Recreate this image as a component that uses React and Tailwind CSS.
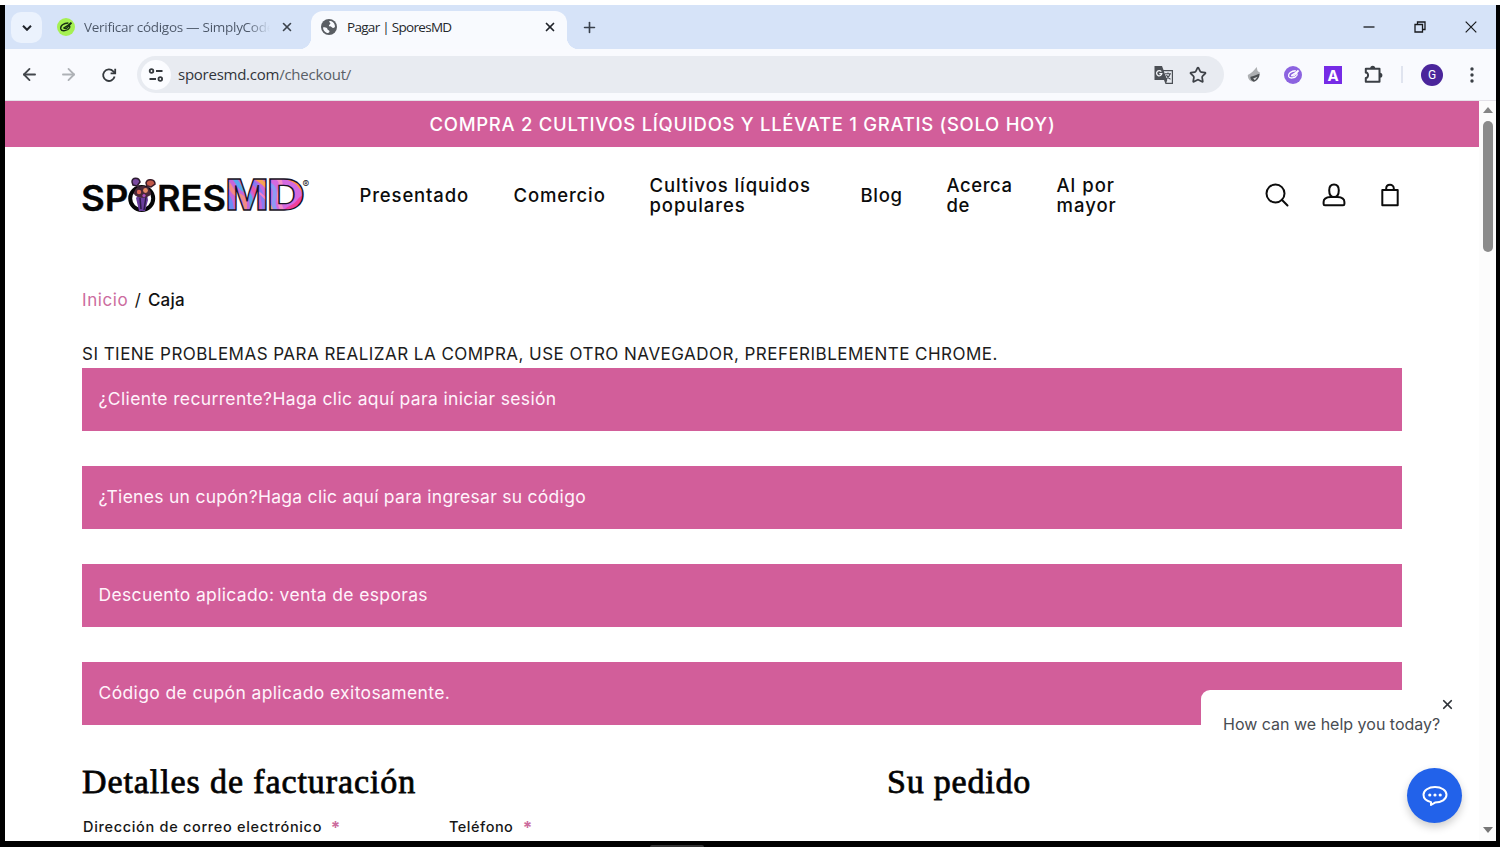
import { X, Plus, ArrowLeft, ArrowRight, Star } from "lucide-react";

const navItems = [
  { label: ["Presentado"], box: "w-[154px] tracking-[0.85px]" },
  { label: ["Comercio"], box: "w-[136px] tracking-[0.85px]" },
  { label: ["Cultivos líquidos", "populares"], box: "w-[211px] tracking-[0.9px]" },
  { label: ["Blog"], box: "w-[86px] tracking-[0.7px]" },
  { label: ["Acerca", "de"], box: "w-[110px] tracking-[0.55px]" },
  { label: ["Al por", "mayor"], box: "w-[90px] tracking-[1px]" },
];

const notices = [
  { text: "¿Cliente recurrente?Haga clic aquí para iniciar sesión", spacing: "tracking-[0.36px]" },
  { text: "¿Tienes un cupón?Haga clic aquí para ingresar su código", spacing: "tracking-[0.28px]" },
  { text: "Descuento aplicado: venta de esporas", spacing: "tracking-[0.35px]" },
  { text: "Código de cupón aplicado exitosamente.", spacing: "tracking-[0.37px]" },
];

function Leaf({ className }) {
  return (
    <svg viewBox="0 0 20 20" className={className} fill="none" stroke="currentColor" strokeWidth="1.8">
      <path d="M13 5C7 5 2.500 8.500 3.500 12.500c1 3.500 9 2.500 11-1.500 1-2.300-1-3.500-3-2.500L7 11.500" />
      <path d="M7 11.500l3.500.3 6.500-7M12 8.500l4.500-4" />
    </svg>
  );
}

function TabStrip() {
  return (
    <div className="flex h-[44px] bg-[#d6e3f8]">
      <div className="ml-1.5 mt-[7px] flex h-[31px] w-[31px] items-center justify-center rounded-[10px] bg-[#ebf2fd]">
        <svg viewBox="0 0 10 6" className="h-[6px] w-[10px]" fill="none" stroke="#20242a" strokeWidth="2">
          <path d="M1 .8l4 4 4-4" />
        </svg>
      </div>
      <div className="flex h-[44px] w-[269px] items-center pl-[15px]">
        <span className="flex h-[18px] w-[18px] items-center justify-center rounded-full bg-[#a5f052] text-[#183014]">
          <Leaf className="h-[16px] w-[16px]" />
        </span>
        <span className="ml-[9px] w-[186px] whitespace-nowrap bg-linear-to-r from-[#4b5667] from-88% to-transparent bg-clip-text text-[13.500px] tracking-[-0.28px] text-transparent">
          Verificar códigos — SimplyCode
        </span>
        <X className="ml-[10px] h-[14px] w-[14px] text-[#3c434c]" strokeWidth={2.8} />
      </div>
      <div className="relative mt-[6px] flex h-[38px] w-[256px] items-center rounded-t-[12px] bg-[#f8fafe] pb-[6px] pl-[10px]">
        <span className="absolute bottom-0 left-[-12px] h-3 w-3 bg-[radial-gradient(circle_at_0_0,#d6e3f8_12px,#f8fafe_12.5px)]" />
        <span className="absolute right-[-12px] bottom-0 h-3 w-3 bg-[radial-gradient(circle_at_100%_0,#d6e3f8_12px,#f8fafe_12.5px)]" />
        <svg viewBox="0 0 16 16" className="h-4 w-4">
          <circle cx="8" cy="8" r="8" fill="#5a5e63" />
          <path d="M2 8.500c2.500-.5 4 .2 4.500 1.700.3 1.200 2.200.8 2 2.300-.2 1-1.500 1.700-2.500 1.600C3.500 13 2 11 2 8.500zM8.500 2c3-.3 5.500 2.500 5.500 5.500-.7 2-2.500 1.500-3.500.5-.6-.8-2.500-.3-2.600-1.500 0-1 1.600-1 1.500-2C9.300 3.500 7.500 3 8.500 2z" fill="#f8fafe" />
        </svg>
        <span className="ml-[10px] w-[189px] whitespace-nowrap text-[13.500px] tracking-[-0.7px] text-[#25282c]">
          Pagar | SporesMD
        </span>
        <X className="ml-[7px] h-[14px] w-[14px] text-[#20242a]" strokeWidth={3} />
      </div>
      <div className="ml-[14px] flex flex-1 items-center">
        <Plus className="h-[17px] w-[17px] text-[#39414c]" strokeWidth={2.3} />
      </div>
      <div className="flex w-[133px] items-center">
        <svg viewBox="0 0 12 12" className="h-3 w-3" stroke="#17191c" strokeWidth="1.3">
          <path d="M.5 6h11" />
        </svg>
        <svg viewBox="0 0 12 12" className="ml-[39px] h-3 w-3" fill="none" stroke="#17191c" strokeWidth="1.3">
          <path d="M1 3.500h7.500V11H1zM3.500 3.500V1H11v7.500H8.500" />
        </svg>
        <svg viewBox="0 0 12 12" className="ml-[39px] h-3 w-3" stroke="#17191c" strokeWidth="1.2">
          <path d="M.7.7l10.600 10.600M11.300.7L.7 11.300" />
        </svg>
      </div>
    </div>
  );
}

function Toolbar() {
  return (
    <div className="flex h-[52px] items-center border-b border-[#e3e1e8] bg-[#f9fafe] pl-[15px]">
      <ArrowLeft className="h-[19px] w-[19px] text-[#43474c]" strokeWidth={2.3} />
      <ArrowRight className="ml-5 h-[19px] w-[19px] text-[#aeb1b6]" strokeWidth={2.3} />
      <svg viewBox="0 0 16 16" className="ml-[23px] h-4 w-4" fill="none" stroke="#35393e" strokeWidth="1.8">
        <path d="M13.600 9.500A5.800 5.800 0 1 1 12.300 4.300L14 6" />
        <path d="M14.200 1.700v4.600H9.600" />
      </svg>
      <div className="ml-[20px] flex h-[37px] w-[1087px] items-center rounded-full bg-[#e8ebf1] pl-1">
        <span className="flex h-[30px] w-[30px] items-center justify-center rounded-full bg-[#fbfcff]">
          <svg viewBox="0 0 16 14" className="h-[14px] w-4" fill="none" stroke="#35393e" strokeWidth="1.8">
            <circle cx="3.500" cy="3" r="1.800" />
            <path d="M8 3h6.500M1.500 11H8" />
            <circle cx="12.300" cy="11" r="1.800" />
          </svg>
        </span>
        <span className="ml-[7px] flex-1 text-[15px] tracking-[-0.25px] text-[#30343a]">
          sporesmd.com<span className="text-[#5a5f67]">/checkout/</span>
        </span>
        <svg viewBox="0 0 20 20" className="h-5 w-5">
          <path d="M.500 1h7.500l1.500 4H19v14h-7.500L10 15H.500z" fill="#4b4f55" />
          <path d="M9.800 6.200h8v11.600h-5.500l1-2.800z" fill="#e8ebf1" />
          <path d="M11 8.700h6M14 7.500v1.200M16 9c-.6 2.500-2 4-4 5.200M12.500 10c.7 2 2.200 3.500 4 4.300" fill="none" stroke="#4b4f55" strokeWidth="1.100" />
          <path d="M7.300 6.600a2.600 2.600 0 1 0 .5 2H5.300" fill="none" stroke="#f4f6fa" strokeWidth="1.300" />
        </svg>
        <Star className="mr-[17px] ml-[15px] h-[18px] w-[18px] text-[#3d4147]" strokeWidth={2.3} />
      </div>
      <svg viewBox="0 0 18 20" className="ml-[22px] h-[18px] w-[16px]">
        <path d="M2 10C6 8 9 5 12 1c1 3 0 5 4 6-2 1-2.500 3-2 5-1 4-5 6-8 5-3-1-4-4-4-7z" fill="#aeb0b3" />
        <path d="M5 12c3-.5 7-2 10.500-4-.3 5-3 9-7 9.500-2-1-4-3-3.500-5.500z" fill="#4c4f53" />
        <path d="M8 14l5-2-3 4z" fill="#d9dadc" />
      </svg>
      <span className="ml-[22px] flex h-[18px] w-[18px] items-center justify-center rounded-full bg-[#8c63e0] text-white">
        <Leaf className="h-[15px] w-[15px]" />
      </span>
      <span className="ml-[22px] flex h-[18px] w-[18px] items-center justify-center bg-[#762be6] pt-px font-[Inter] text-[15px] leading-none font-bold text-white">
        A
      </span>
      <svg viewBox="0 0 20 20" className="ml-[21px] h-5 w-5" fill="none" stroke="#3b3f45" strokeWidth="2" strokeLinejoin="round">
        <path d="M2.800 3.700H16.500V16.700H2.800V13c3 .2 3-5.600 0-5.400z" />
        <path d="M8.200 3.300a1.500 1.500 0 0 1 3 0M16.900 8.800a1.500 1.500 0 0 1 0 3" fill="#3b3f45" />
      </svg>
      <span className="ml-[18px] h-[17px] w-[2px] bg-[#e0e4ef]" />
      <span className="ml-[18px] flex h-[22px] w-[22px] items-center justify-center rounded-full bg-[#4b259b] pt-px font-[Roboto] text-[12px] leading-none text-white">
        G
      </span>
      <svg viewBox="0 0 4 16" className="ml-[27px] h-4 w-1" fill="#3b3f45">
        <circle cx="2" cy="2" r="1.700" />
        <circle cx="2" cy="8" r="1.700" />
        <circle cx="2" cy="14" r="1.700" />
      </svg>
    </div>
  );
}

function Logo() {
  return (
    <svg viewBox="0 -10 230 60" className="h-[60px] w-[230px] overflow-visible" role="img" aria-label="SporesMD">
      <defs>
        <pattern id="marble" x="144" y="0" width="42" height="40" patternUnits="userSpaceOnUse">
          <rect width="42" height="40" fill="#c566dc" />
          <g fill="none" strokeWidth="4">
            <path d="M-2 6c8 2 6 12 14 14s8 10 6 22" stroke="#f28a86" />
            <path d="M4 0c8 4 7 12 14 15s9 12 7 26" stroke="#5aa8ee" />
            <path d="M11 0c6 4 8 8 13 11s9 14 8 30" stroke="#e857a8" />
            <path d="M19 0c3 5 8 6 12 11s8 14 7 30" stroke="#8a78f0" />
            <path d="M27 0c4 5 9 5 15 13" stroke="#f7a255" />
            <path d="M-2 20c7 1 7 8 9 22" stroke="#6b8cf2" />
            <path d="M30 16c5 2 9 7 13 11" stroke="#f37ec9" strokeWidth="2" />
          </g>
        </pattern>
        <pattern id="marbleWarm" x="186" y="0" width="42" height="40" patternUnits="userSpaceOnUse">
          <rect width="42" height="40" fill="#d46ae0" />
          <g fill="none" strokeWidth="4">
            <path d="M-2 10c8-2 10 6 8 14s2 10 4 18" stroke="#8e9af3" />
            <path d="M2 2c10 0 12 4 10 12s-2 16 6 28" stroke="#f58cc9" />
            <path d="M14 0c8 4 13 3 18 10s6 10 12 10" stroke="#ff9a36" strokeWidth="5" />
            <path d="M20 0c8 4 12 3 20 9" stroke="#f02fb0" strokeWidth="3" />
            <path d="M16 40c2-8 10-6 14-12s8-8 14-6" stroke="#ef3fa0" strokeWidth="5" />
            <path d="M-2 28c4 0 6 6 7 14" stroke="#f7a873" strokeWidth="3" />
          </g>
        </pattern>
      </defs>
      <g fontFamily="Inter, sans-serif" fontWeight="600" fontSize="35" fill="#060606" stroke="#060606" strokeWidth=".3">
        <text x="-1" y="35.500" textLength="47.500" lengthAdjust="spacingAndGlyphs">SP</text>
        <text x="75" y="35.500" textLength="69" lengthAdjust="spacingAndGlyphs">RES</text>
      </g>
      <circle cx="59.700" cy="23.500" r="11.500" fill="#fff" stroke="#060606" strokeWidth="4" />
      <path d="M57 36l-3-13 4-5 7 1 1 6-3 11z" fill="#6a3d9e" />
      <path d="M59 34l-1-11M62 35l2-13" stroke="#2c1a45" strokeWidth="1.500" />
      <path d="M52 19c0-10 16-11 17 0-3 5-14 5-17 0z" fill="#4a2838" />
      <path d="M50 7c0-5 7-5 8 0l-3 4-4-1z" fill="#7a4aa0" stroke="#2b1a30" strokeWidth="1.500" />
      <path d="M64 8c1-5 9-4 9 1l-4 3-4-1z" fill="#c25a4a" stroke="#3a1a26" strokeWidth="1.500" />
      <path d="M55 10l4 6M67 11l-3 5" stroke="#3b2436" strokeWidth="2" />
      <circle cx="57" cy="17" r="2.200" fill="#df6757" />
      <circle cx="63.500" cy="15.500" r="2.400" fill="#e68a64" />
      <circle cx="62" cy="20.500" r="1.600" fill="#b04fc0" />
      <g fontFamily="Inter, sans-serif" fontWeight="800" fontSize="43" stroke="#171225" strokeWidth="1.300">
        <text x="143.500" y="34.800" textLength="43" lengthAdjust="spacingAndGlyphs" fill="url(#marble)">M</text>
        <text x="185" y="34.800" textLength="38" lengthAdjust="spacingAndGlyphs" fill="url(#marbleWarm)">D</text>
      </g>
      <text x="220.500" y="12.500" fontFamily="Inter, sans-serif" fontSize="10" fill="#222">®</text>
    </svg>
  );
}

function SiteHeader() {
  return (
    <header className="flex h-[96px] items-center pl-[77px]">
      <Logo />
      <nav className="ml-[47.500px] flex flex-1 items-center text-[18.500px] font-medium leading-[20px] text-[#0c0c0c]">
        {navItems.map((item) => (
          <a key={item.label[0]} className={item.box + " -mt-px shrink-0 whitespace-nowrap"}>
            {item.label.map((line) => (
              <span key={line} className="block">{line}</span>
            ))}
          </a>
        ))}
      </nav>
      <div className="flex w-[214px] items-center">
        <svg viewBox="0 0 24 24" className="h-6 w-6" fill="none" stroke="#0c0c0c" strokeWidth="2">
          <circle cx="10.500" cy="10.500" r="9" />
          <path d="M16.800 16.800L22.500 22.500" strokeLinecap="round" />
        </svg>
        <svg viewBox="0 0 24 24" className="ml-[33px] h-6 w-6" fill="none" stroke="#0c0c0c" strokeWidth="2">
          <path d="M12 1.500c3.400 0 4.800 2.500 4.800 5.700 0 3.400-1.400 6.800-4.800 6.800s-4.800-3.400-4.800-6.800c0-3.200 1.400-5.700 4.800-5.700z" />
          <path d="M8.500 14c-4.500.2-6.900 1.500-6.900 5v2c0 .9.500 1.300 1.300 1.300h18.200c.8 0 1.300-.4 1.300-1.300v-2c0-3.500-2.400-4.800-6.900-5z" />
        </svg>
        <svg viewBox="0 0 20 24" className="ml-[34px] h-6 w-5" fill="none" stroke="#0c0c0c" strokeWidth="2" strokeLinejoin="round">
          <path d="M2.300 7h15.400v15.300H2.300z" />
          <path d="M6.200 7V5.500c0-5 7.600-5 7.600 0V7" />
        </svg>
      </div>
    </header>
  );
}

function ChatWidget() {
  return (
    <div className="absolute right-0 bottom-0 h-[151px] w-[278px] rounded-tl-[9px] bg-white">
      <X className="absolute top-[7px] left-[239px] h-[15px] w-[15px] text-[#2e3238]" strokeWidth={2.8} />
      <p className="mt-[22px] ml-[22px] whitespace-nowrap text-[16px] leading-6 text-[#484c52]">
        How can we help you today?
      </p>
      <div className="absolute top-[78px] left-[206px] flex h-[55px] w-[55px] items-center justify-center rounded-full bg-[#2262ea] shadow-[0_4px_8px_rgba(0,0,0,0.2)]">
        <svg viewBox="0 0 26 22" className="h-[22px] w-[26px]" fill="none" stroke="#fff" strokeWidth="2">
          <path d="M13 2c6.400 0 11.500 3.300 11.500 7.800S19.400 17.600 13 17.600L9 20v-2.900C4.500 16 1.500 13.300 1.500 9.800 1.500 5.300 6.600 2 13 2z" strokeLinejoin="round" />
          <g fill="#fff" stroke="none">
            <circle cx="7.800" cy="10" r="1.600" />
            <circle cx="13" cy="10" r="1.600" />
            <circle cx="18.200" cy="10" r="1.600" />
          </g>
        </svg>
      </div>
    </div>
  );
}

function Scrollbar() {
  return (
    <div className="flex w-[17px] flex-col items-center bg-[#fcfcfc] pl-px">
      <span className="mt-[6px] border-x-[5px] border-b-[6px] border-x-transparent border-b-[#858585]" />
      <span className="mt-[8px] h-[131px] w-[10px] rounded-full bg-[#8b8b8b]" />
      <span className="mt-auto mb-[8px] border-x-[5px] border-t-[6px] border-x-transparent border-t-[#777]" />
    </div>
  );
}

export default function App() {
  return (
    <div className="flex h-[847px] w-[1500px] flex-col overflow-hidden bg-white">
      <div className="mt-[5px] flex h-[842px] flex-col bg-black pr-[4px] pl-[5px]">
        <div className="h-[836px] w-[1491px] overflow-hidden bg-white">
          <div className="font-['Open_Sans',sans-serif]">
            <TabStrip />
            <Toolbar />
          </div>
          <div className="flex h-[740px]">
            <main className="relative w-[1474px] overflow-hidden font-[Inter,sans-serif]">
              <div className="flex h-[46px] items-center justify-center bg-[#d25e9a] pt-px pl-px text-[18.500px] font-medium whitespace-nowrap text-white">
                <span className="tracking-[0.7px]">COMPRA 2 CULTIVOS LÍQUIDOS Y LLÉVATE 1 GRATIS (SOLO HOY)</span>
              </div>
              <SiteHeader />
              <div className="pl-[77px]">
                <p className="mt-[45px] text-[17px] leading-6 tracking-[0.6px] text-[#111]">
                  <a className="text-[#cc6c9e]">Inicio</a> <span className="mx-px">/</span>{" "}
                  <span className="font-medium tracking-[0.2px]">Caja</span>
                </p>
                <p className="mt-[30px] text-[17px] leading-6 tracking-[0.47px] whitespace-nowrap text-[#1c1c1c]">
                  SI TIENE PROBLEMAS PARA REALIZAR LA COMPRA, USE OTRO NAVEGADOR, PREFERIBLEMENTE CHROME.
                </p>
                <div className="mt-[2px] flex w-[1320px] flex-col gap-[35px]">
                  {notices.map((n) => (
                    <div key={n.text} className="flex h-[63px] items-center bg-[#d25e9a] pl-[16.500px] text-[17.500px] text-[#fff3fb]">
                      <span className={n.spacing}>{n.text}</span>
                    </div>
                  ))}
                </div>
                <div className="mt-[36px] flex">
                  <section className="w-[805px]">
                    <h2 className="font-['Liberation_Serif',serif] text-[34px] leading-[42px] tracking-[0.9px] [-webkit-text-stroke:0.8px_#0c0c0c]">
                      Detalles de facturación
                    </h2>
                    <div className="mt-[14px] ml-px flex text-[14.500px] font-medium leading-5 tracking-[0.68px] text-[#161616]">
                      <label className="w-[366px]">
                        Dirección de correo electrónico{" "}
                        <span className="relative top-[2px] ml-1 text-[17px] leading-none font-bold text-[#cc6c9e]">*</span>
                      </label>
                      <label className="tracking-[0.5px]">
                        Teléfono{" "}
                        <span className="relative top-[2px] ml-[5px] text-[17px] leading-none font-bold text-[#cc6c9e]">*</span>
                      </label>
                    </div>
                  </section>
                  <section>
                    <h2 className="font-['Liberation_Serif',serif] text-[34px] leading-[42px] tracking-[0.8px] [-webkit-text-stroke:0.8px_#0c0c0c]">
                      Su pedido
                    </h2>
                  </section>
                </div>
              </div>
              <ChatWidget />
            </main>
            <Scrollbar />
          </div>
        </div>
        <div className="mt-[4px] ml-[645px] h-[2px] w-[54px] rounded-t bg-[#333]" />
      </div>
    </div>
  );
}
